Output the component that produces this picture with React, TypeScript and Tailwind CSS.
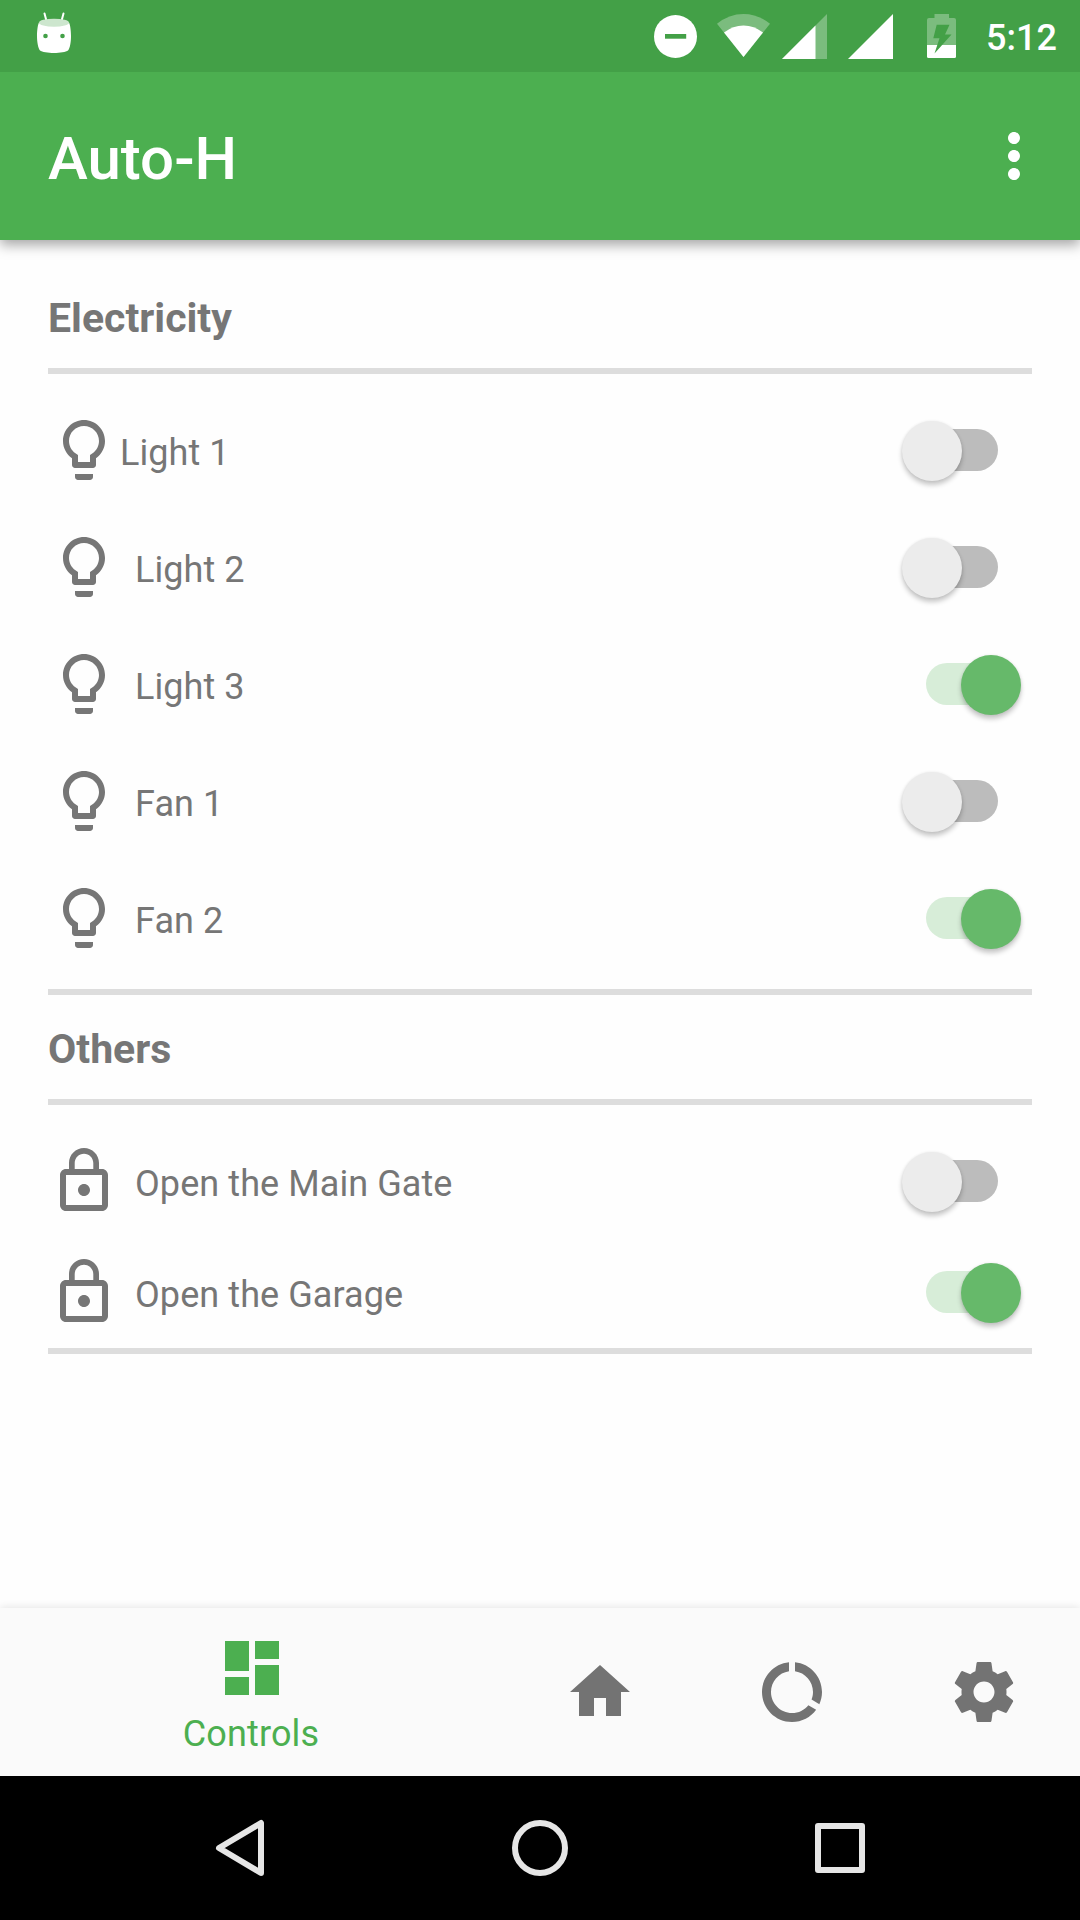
import React, { useState } from "react";

const BULB =
  "M9 21c0 .55.45 1 1 1h4c.55 0 1-.45 1-1v-1H9v1zm3-19C8.14 2 5 5.14 5 9c0 2.38 1.19 4.47 3 5.74V17c0 .55.45 1 1 1h6c.55 0 1-.45 1-1v-2.26c1.81-1.27 3-3.36 3-5.74 0-3.86-3.14-7-7-7zm2.85 11.1l-.85.6V16h-4v-2.3l-.85-.6C7.8 12.16 7 10.63 7 9c0-2.76 2.24-5 5-5s5 2.24 5 5c0 1.63-.8 3.16-2.15 4.1z";
const LOCK =
  "M12 17c1.1 0 2-.9 2-2s-.9-2-2-2-2 .9-2 2 .9 2 2 2zm6-9h-1V6c0-2.76-2.24-5-5-5S7 3.24 7 6v2H6c-1.1 0-2 .9-2 2v10c0 1.1.9 2 2 2h12c1.1 0 2-.9 2-2V10c0-1.1-.9-2-2-2zM8.9 6c0-1.71 1.39-3.1 3.1-3.1s3.1 1.39 3.1 3.1v2H8.9V6zM18 20H6V10h12v10z";
const DASHBOARD = "M3 13h8V3H3v10zm0 8h8v-6H3v6zm10 0h8V11h-8v10zm0-18v6h8V3h-8z";
const HOME = "M10 20v-6h4v6h5v-8h3L12 3 2 12h3v8z";
const USAGE =
  "M13 2.05v3.03c3.39.49 6 3.39 6 6.92 0 .9-.18 1.75-.48 2.54l2.6 1.53c.56-1.24.88-2.62.88-4.07 0-5.18-3.95-9.45-9-9.95zM12 19c-3.87 0-7-3.13-7-7 0-3.53 2.61-6.43 6-6.92V2.05c-5.06.5-9 4.76-9 9.95 0 5.52 4.47 10 9.99 10 3.31 0 6.24-1.61 8.06-4.09l-2.6-1.53C16.17 17.98 14.21 19 12 19z";
const GEAR =
  "M19.43 12.98c.04-.32.07-.64.07-.98s-.03-.66-.07-.98l2.11-1.65c.19-.15.24-.42.12-.64l-2-3.46c-.12-.22-.39-.3-.61-.22l-2.49 1c-.52-.4-1.08-.73-1.69-.98l-.38-2.65C14.46 2.18 14.25 2 14 2h-4c-.25 0-.46.18-.49.42l-.38 2.65c-.61.25-1.17.59-1.69.98l-2.49-1c-.23-.09-.49 0-.61.22l-2 3.46c-.13.22-.07.49.12.64l2.11 1.65c-.04.32-.07.65-.07.98s.03.66.07.98l-2.11 1.65c-.19.15-.24.42-.12.64l2 3.46c.12.22.39.3.61.22l2.49-1c.52.4 1.08.73 1.69.98l.38 2.65c.03.24.24.42.49.42h4c.25 0 .46-.18.49-.42l.38-2.65c.61-.25 1.17-.59 1.69-.98l2.49 1c.23.09.49 0 .61-.22l2-3.46c.12-.22.07-.49-.12-.64l-2.11-1.65zM12 15.5c-1.93 0-3.5-1.57-3.5-3.5s1.57-3.5 3.5-3.5 3.5 1.57 3.5 3.5-1.57 3.5-3.5 3.5z";
const DOTS =
  "M12 8c1.1 0 2-.9 2-2s-.9-2-2-2-2 .9-2 2 .9 2 2 2zm0 2c-1.1 0-2 .9-2 2s.9 2 2 2 2-.9 2-2-.9-2-2-2zm0 6c-1.1 0-2 .9-2 2s.9 2 2 2 2-.9 2-2-.9-2-2-2z";

function Icon({ d }: { d: string }) {
  return (
    <svg viewBox="0 0 24 24" className="size-[72px] shrink-0 fill-current">
      <path d={d} />
    </svg>
  );
}

function StatusBar() {
  return (
    <header className="relative z-20 flex h-[72px] items-start bg-[#43a047] text-white">
      <svg viewBox="0 0 40 72" className="ml-[34px] h-[72px] w-10">
        <path d="M10.500 13.500 12.500 21M29.500 13.500 27.500 21" stroke="#fff" strokeWidth="2" strokeLinecap="round" />
        <path
          d="M5 22.500C4 24 3 30 3 36s1 12 3 14.500C8 52 14 53 20 53s12-1 14-2.500C36 48 37 42 37 36s-1-12-2-13.500C32 27 8 27 5 22.500Z"
          fill="#fff"
        />
        <ellipse cx="20" cy="22.700" rx="15" ry="4" fill="#cde6ce" />
        <circle cx="11.500" cy="36" r="2.300" fill="#43a047" />
        <circle cx="28.500" cy="36" r="2.300" fill="#43a047" />
      </svg>
      <div className="flex-1" />
      <svg viewBox="0 0 44 72" className="mr-[19px] h-[72px] w-11">
        <circle cx="21.500" cy="36.500" r="21.500" fill="#fff" />
        <rect x="11" y="34" width="21.200" height="4.700" fill="#43a047" />
      </svg>
      <svg viewBox="0 0 54 72" className="mr-[11px] h-[72px] w-[54px]">
        <path d="M26.500 57 0 23.800Q12 14 26.500 14T53 23.800Z" fill="#fff" fillOpacity=".3" />
        <path d="M26.500 57 7 32.500Q16 25.500 26.500 25.500T46 32.500Z" fill="#fff" />
      </svg>
      <svg viewBox="0 0 46 72" className="mr-[20px] h-[72px] w-[46px]">
        <path d="M0 59 45 14V59Z" fill="#fff" fillOpacity=".3" />
        <path d="M0 59 33.500 25.500V59Z" fill="#fff" />
      </svg>
      <svg viewBox="0 0 46 72" className="mr-[33px] h-[72px] w-[46px]">
        <path d="M0 59 45 14V59Z" fill="#fff" />
      </svg>
      <svg viewBox="0 0 30 72" className="mr-[29px] h-[72px] w-[30px]">
        <path d="M7.500 14H22V18H27Q29 18 29 20V45H0V20Q0 18 2 18H7.500Z" fill="#fff" fillOpacity=".3" />
        <path d="M0 45H29V56.500Q29 58 27.500 58H1.500Q0 58 0 56.500Z" fill="#fff" />
        <path d="M9.700 24.800H22.500L18 34.500H24.500L7.500 53.500 12.500 38.300H6.300Z" fill="#43a047" />
      </svg>
      <span className="mr-[22px] w-[72px] pt-[17px] text-[36px] leading-[42px] font-medium whitespace-nowrap">5:12</span>
    </header>
  );
}

function Switch({ on, onToggle }: { on: boolean; onToggle: () => void }) {
  return (
    <button
      role="switch"
      aria-checked={on}
      onClick={onToggle}
      className={`mr-[10px] flex h-[60px] w-[120px] items-center ${on ? "justify-end pr-px" : "justify-start"}`}
    >
      {on && <span className="mr-[-37px] h-[42px] w-[72px] rounded-full bg-[#d7edd8]" />}
      <span
        className={`relative top-[0.5px] z-10 size-[60px] shrink-0 rounded-full shadow-[0_4px_5px_rgba(0,0,0,0.22),0_0_3px_rgba(0,0,0,0.08)] ${on ? "bg-[#66b96a]" : "bg-[#ececec]"}`}
      />
      {!on && <span className="ml-[-36px] h-[42px] w-[72px] rounded-full bg-[#bcbcbc]" />}
    </button>
  );
}

function Row({ icon, label, initial, tight }: { icon: string; label: string; initial: boolean; tight?: boolean }) {
  const [on, setOn] = useState(initial);
  return (
    <div className="flex h-[72px] items-center">
      <Icon d={icon} />
      <span className={`flex-1 pt-[5px] text-[36px] leading-[42px] tracking-[0.08px] ${tight ? "" : "pl-[15px]"}`}>{label}</span>
      <Switch on={on} onToggle={() => setOn(!on)} />
    </div>
  );
}

function Divider() {
  return <div className="h-[6px] bg-[#dddddd]" />;
}

export default function App() {
  return (
    <div className="flex h-[1920px] w-[1080px] flex-col overflow-hidden bg-[#fefefe] font-['Roboto',sans-serif]">
      <StatusBar />
      <div className="relative z-10 flex h-[168px] items-start justify-between bg-[#4caf50] pl-12 text-white shadow-[0_5px_12px_rgba(0,0,0,0.35)]">
        <h1 className="pt-[52px] text-[60px] leading-[70px] font-medium">Auto-H</h1>
        <button aria-label="More options" className="mt-12 mr-[30px]">
          <Icon d={DOTS} />
        </button>
      </div>

      <main className="flex-1 px-12 text-[#767676]">
        <h2 className="h-[128px] pt-[54px] text-[41px] leading-[48px] font-bold">Electricity</h2>
        <Divider />
        <div className="flex flex-col gap-[45px] pt-10 pb-[35px]">
          <Row icon={BULB} label="Light 1" initial={false} tight />
          <Row icon={BULB} label="Light 2" initial={false} />
          <Row icon={BULB} label="Light 3" initial={true} />
          <Row icon={BULB} label="Fan 1" initial={false} />
          <Row icon={BULB} label="Fan 2" initial={true} />
        </div>
        <Divider />
        <h2 className="h-[104px] pt-[30px] text-[41px] leading-[48px] font-bold">Others</h2>
        <Divider />
        <div className="flex flex-col gap-[39px] pt-10 pb-5">
          <Row icon={LOCK} label="Open the Main Gate" initial={false} />
          <Row icon={LOCK} label="Open the Garage" initial={true} />
        </div>
        <Divider />
      </main>

      <nav className="flex h-[168px] bg-[#fafafa] text-[#737373] shadow-[0_-1px_8px_rgba(0,0,0,0.1)]">
        <button className="flex w-[504px] flex-col items-center pt-6 text-[#4caf50]">
          <Icon d={DASHBOARD} />
          <span className="pt-[9px] pr-[2px] text-[36px] leading-[42px] tracking-[0.15px]">Controls</span>
        </button>
        <button aria-label="Home" className="flex w-[192px] items-center justify-center">
          <Icon d={HOME} />
        </button>
        <button aria-label="Usage" className="flex w-[192px] items-center justify-center">
          <Icon d={USAGE} />
        </button>
        <button aria-label="Settings" className="flex w-[192px] items-center justify-center">
          <Icon d={GEAR} />
        </button>
      </nav>

      <footer className="flex h-[144px] items-center justify-between bg-black px-[204px]">
        <svg viewBox="0 0 72 72" className="size-[72px]" fill="none" stroke="#e6e6e6" strokeWidth="6" strokeLinejoin="round">
          <path d="M57 11V61L15 36Z" />
        </svg>
        <svg viewBox="0 0 72 72" className="size-[72px]" fill="none" stroke="#e6e6e6" strokeWidth="6">
          <circle cx="36" cy="36" r="25" />
        </svg>
        <svg viewBox="0 0 72 72" className="size-[72px]" fill="none" stroke="#e6e6e6" strokeWidth="6" strokeLinejoin="round">
          <rect x="14" y="14" width="44" height="44" />
        </svg>
      </footer>
    </div>
  );
}
